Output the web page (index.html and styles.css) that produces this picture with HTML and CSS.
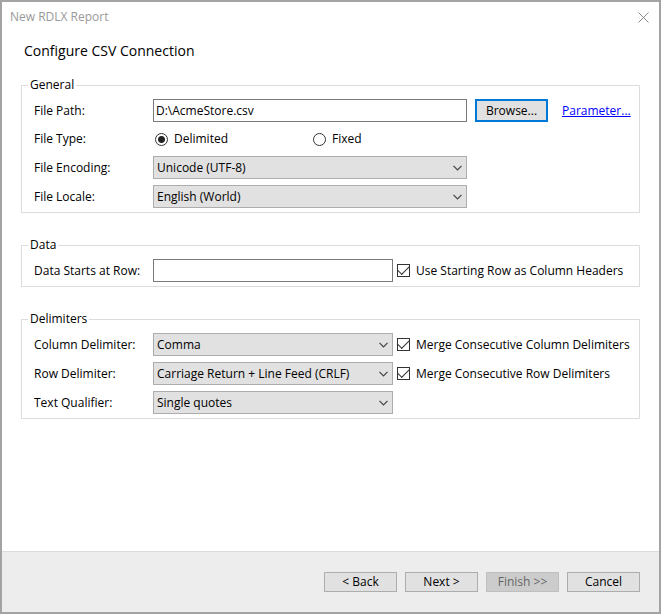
FILE: index.html
```html
<!DOCTYPE html>
<html lang="en">
<head>
<meta charset="utf-8">
<title>New RDLX Report</title>
<link rel="stylesheet" href="styles.css">
</head>
<body>
<form class="dialog">
  <header class="titlebar">
    <span class="title">New RDLX Report</span>
    <button type="button" class="close" aria-label="Close">
      <svg width="11" height="11" viewBox="0 0 11 11"><path d="M.5 .5l10 10M10.5 .5l-10 10"/></svg>
    </button>
  </header>
  <main class="content">
    <h1>Configure CSV Connection</h1>

    <fieldset>
      <legend>General</legend>
      <div class="row">
        <label class="name" for="path">File Path:</label>
        <input class="control" type="text" id="path" value="D:\AcmeStore.csv">
        <div class="side side-actions">
          <button type="button" class="button browse">Browse...</button>
          <a href="#parameter">Parameter...</a>
        </div>
      </div>
      <div class="row row-radios" role="radiogroup" aria-labelledby="type">
        <span class="name" id="type">File Type:</span>
        <label class="option radio"><input type="radio" name="type" checked>Delimited</label>
        <label class="option radio"><input type="radio" name="type">Fixed</label>
      </div>
      <div class="row">
        <label class="name" for="encoding">File Encoding:</label>
        <div class="control select">
          <select id="encoding"><option>Unicode (UTF-8)</option></select>
          <svg class="arrow" width="9" height="6" viewBox="0 0 9 6"><path d="M.5 .8l4 4 4-4"/></svg>
        </div>
        <div class="side side-actions"></div>
      </div>
      <div class="row">
        <label class="name" for="locale">File Locale:</label>
        <div class="control select">
          <select id="locale"><option>English (World)</option></select>
          <svg class="arrow" width="9" height="6" viewBox="0 0 9 6"><path d="M.5 .8l4 4 4-4"/></svg>
        </div>
        <div class="side side-actions"></div>
      </div>
    </fieldset>

    <fieldset>
      <legend>Data</legend>
      <div class="row">
        <label class="name" for="start">Data Starts at Row:</label>
        <input class="control" type="text" id="start">
        <label class="side option"><input type="checkbox" checked>Use Starting Row as Column Headers</label>
      </div>
    </fieldset>

    <fieldset>
      <legend>Delimiters</legend>
      <div class="row">
        <label class="name" for="column">Column Delimiter:</label>
        <div class="control select">
          <select id="column"><option>Comma</option></select>
          <svg class="arrow" width="9" height="6" viewBox="0 0 9 6"><path d="M.5 .8l4 4 4-4"/></svg>
        </div>
        <label class="side option"><input type="checkbox" checked>Merge Consecutive Column Delimiters</label>
      </div>
      <div class="row">
        <label class="name" for="rowdelim">Row Delimiter:</label>
        <div class="control select">
          <select id="rowdelim"><option>Carriage Return + Line Feed (CRLF)</option></select>
          <svg class="arrow" width="9" height="6" viewBox="0 0 9 6"><path d="M.5 .8l4 4 4-4"/></svg>
        </div>
        <label class="side option"><input type="checkbox" checked>Merge Consecutive Row Delimiters</label>
      </div>
      <div class="row">
        <label class="name" for="qualifier">Text Qualifier:</label>
        <div class="control select">
          <select id="qualifier"><option>Single quotes</option></select>
          <svg class="arrow" width="9" height="6" viewBox="0 0 9 6"><path d="M.5 .8l4 4 4-4"/></svg>
        </div>
        <div class="side"></div>
      </div>
    </fieldset>
  </main>
  <footer class="footer">
    <button type="button" class="button">&lt; Back</button>
    <button type="button" class="button">Next &gt;</button>
    <button type="button" class="button" disabled>Finish &gt;&gt;</button>
    <button type="button" class="button">Cancel</button>
  </footer>
</form>
</body>
</html>
```
FILE: styles.css
```css
* {
  box-sizing: border-box;
}

body {
  margin: 0;
  background: #fff;
}

body,
button,
input,
select {
  font: 12px/16px "Open Sans", "Noto Sans", sans-serif;
  color: #000;
}

.dialog {
  display: flex;
  flex-direction: column;
  min-height: 100vh;
  border: 2px solid #a3a3a3;
}

.titlebar {
  display: flex;
  align-items: center;
  justify-content: space-between;
  height: 30px;
  padding: 0 8px;
  color: #999;
}

.close {
  display: flex;
  padding: 2px;
  border: 0;
  background: none;
}

.close svg {
  fill: none;
  stroke: #8a8a8a;
}

.content {
  flex: 1;
  display: flex;
  flex-direction: column;
  gap: 24px;
  padding: 9px 19px 24px;
}

h1 {
  margin: 0 3px -8px;
  font-size: 14px;
  line-height: 20px;
  font-weight: 400;
}

fieldset {
  display: flex;
  flex-direction: column;
  gap: 6px;
  min-width: 0;
  margin: 0;
  padding: 6px 13px 4px 12px;
  border: 1px solid #dcdcdc;
}

legend {
  margin-left: -6px;
  padding: 0 2px;
}

.row {
  display: flex;
  align-items: center;
  height: 23px;
}

.row-radios {
  height: 22px;
}

.name {
  flex: none;
  width: 119px;
}

.control {
  flex: 1;
  min-width: 0;
  height: 23px;
}

input[type="text"] {
  padding: 0 2px;
  border: 1px solid #7a7a7a;
  border-radius: 0;
  background: #fff;
}

.select {
  display: grid;
  align-items: center;
}

.select > * {
  grid-area: 1 / 1;
}

select {
  appearance: none;
  width: 100%;
  height: 23px;
  padding: 0 20px 0 3px;
  border: 1px solid #adadad;
  border-radius: 0;
  background: #e1e1e1;
}

.arrow {
  justify-self: end;
  margin-right: 5px;
  fill: none;
  stroke: #444;
  stroke-width: 1.2;
  pointer-events: none;
}

.side {
  flex: none;
  width: 233px;
}

.side-actions {
  display: flex;
  align-items: center;
  gap: 14px;
  width: 159px;
  padding-left: 8px;
}

a {
  color: #00f;
}

.option {
  display: flex;
  align-items: center;
  gap: 6px;
  padding-left: 4px;
  white-space: nowrap;
}

.radio {
  width: 158px;
  padding-left: 2px;
}

input[type="radio"],
input[type="checkbox"] {
  appearance: none;
  flex: none;
  width: 13px;
  height: 13px;
  margin: 0;
  border: 1px solid #333;
  background: #fff;
}

input[type="radio"] {
  border-radius: 50%;
}

input[type="radio"]:checked {
  background: radial-gradient(circle, #222 3px, #fff 4px);
}

input[type="checkbox"] {
  display: grid;
  place-items: center;
}

input[type="checkbox"]:checked::before {
  content: "";
  width: 10px;
  height: 5px;
  margin-bottom: 3px;
  border: solid #333;
  border-width: 0 0 1px 1px;
  transform: rotate(-45deg);
}

.button {
  flex: none;
  width: 73px;
  height: 20px;
  padding: 0;
  border: 1px solid #adadad;
  border-radius: 0;
  background: #e1e1e1;
}

.browse {
  height: 23px;
  border: 2px solid #0078d7;
}

.button:disabled {
  border-color: #bfbfbf;
  background: #ccc;
  color: #666;
}

.footer {
  display: flex;
  justify-content: flex-end;
  gap: 8px;
  padding: 20px 19px;
  border-top: 1px solid #dcdcdc;
  background: #ededed;
}
```
